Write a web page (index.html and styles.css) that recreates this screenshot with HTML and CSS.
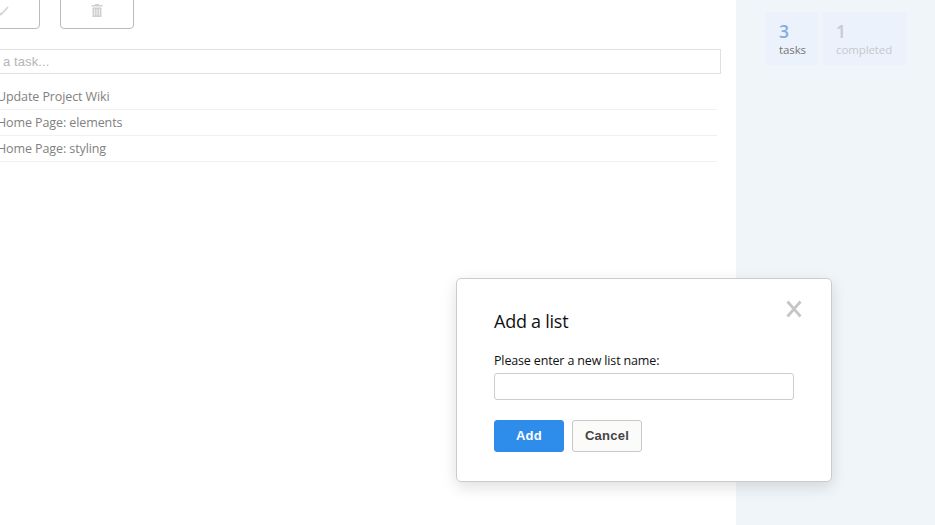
FILE: index.html
```html
<!DOCTYPE html>
<html lang="en">
<head>
<meta charset="utf-8">
<title>Tasks</title>
<link rel="stylesheet" href="styles.css">
</head>
<body>
<div class="app">
  <main class="main">
    <div class="toolbar">
      <button class="tool" aria-label="Complete"><svg width="12" height="12" viewBox="0 0 12 12"><path d="M1 6.5 4 9.5 11 2" fill="none" stroke="#d2d2d4" stroke-width="1.6"/></svg></button>
      <button class="tool" aria-label="Delete"><svg width="12" height="14" viewBox="0 0 12 14"><path d="M4 0h4v1h3.5v1.5H.5V1H4zM1.5 3.5h9V13h-9z" fill="#d0d0d4"/><path d="M3.5 5v6.5M6 5v6.5M8.5 5v6.5" stroke="#f4f4f6" stroke-width=".9"/></svg></button>
    </div>
    <input class="new-task" placeholder="a task..." aria-label="New task">
    <ul class="tasks">
      <li>Update Project Wiki</li>
      <li>Home Page: elements</li>
      <li>Home Page: styling</li>
    </ul>
  </main>
  <aside class="side">
    <div class="stat open"><strong>3</strong><span>tasks</span></div>
    <div class="stat done"><strong>1</strong><span>completed</span></div>
  </aside>
</div>
<section class="dialog" role="dialog">
  <button class="close" aria-label="Close"><svg width="16" height="18" viewBox="0 0 16 18"><path d="M1.5 1.5 14.5 16.5M14.5 1.5 1.5 16.5" stroke="#c5c6c8" stroke-width="2.7"/></svg></button>
  <h2>Add a list</h2>
  <label for="name">Please enter a new list name:</label>
  <input id="name" class="name">
  <div class="actions"><button class="btn primary">Add</button><button class="btn">Cancel</button></div>
</section>
</body>
</html>
```
FILE: styles.css
```css
* { box-sizing: border-box; }
body { margin: 0; overflow: hidden; background: #fff; font-family: "Open Sans", "Noto Sans", sans-serif; }
button, input { margin: 0; font-family: "Liberation Sans", Arial, sans-serif; }
.app { display: flex; height: 525px; }
.main { width: 736px; overflow: hidden; }
.toolbar { display: flex; gap: 20px; height: 29px; margin-left: -34px; align-items: flex-end; }
.tool { width: 74px; height: 40px; flex: none; display: flex; align-items: center; justify-content: center; padding: 0; border: 1px solid #bbb; border-radius: 4px; background: #fff; }
.tool svg { display: block; margin-top: 3px; }
.new-task { display: block; width: 731px; height: 25px; margin: 20px 0 0 -10px; padding: 0 12px; border: 1px solid #e0e0e0; font-size: 13px; letter-spacing: .1px; outline: 0; }
.new-task::placeholder { color: #b5b5b5; opacity: 1; }
.tasks { list-style: none; margin: 10px 0 0 -3px; padding: 0; width: 720px; }
.tasks li { height: 26px; border-bottom: 1px solid #f0f0f0; line-height: 25px; font-size: 12.5px; letter-spacing: -.1px; color: #818181; white-space: nowrap; }
.side { flex: 1; display: flex; align-items: flex-start; gap: 5px; padding: 12px 0 0 30px; background: #f0f5fa; }
.stat { height: 53px; padding: 9px 13px 0; background: #ebf2fb; white-space: nowrap; }
.stat strong { display: block; height: 21px; line-height: 21px; font-size: 17.5px; font-weight: 600; }
.stat span { display: block; line-height: 16px; font-size: 11.5px; letter-spacing: -.1px; }
.open { width: 52px; color: #777; }
.open strong { color: #85ace2; }
.done { width: 83px; color: #c6c9ce; }
.dialog { position: absolute; left: 456px; top: 278px; width: 376px; height: 204px; padding: 29px 37px; border: 1px solid #ccc; border-radius: 5px; background: #fff; box-shadow: 0 5px 15px rgba(0,0,0,.13); }
.close { position: absolute; right: 29px; top: 21px; padding: 0; border: 0; background: none; }
.close svg { display: block; }
h2 { margin: 0; height: 27px; line-height: 26px; font-size: 18px; font-weight: 400; letter-spacing: -.25px; color: #111; }
label { display: block; margin-top: 16px; height: 20px; line-height: 20px; font-size: 12.5px; letter-spacing: -.15px; color: #111; white-space: nowrap; }
.name { display: block; width: 300px; height: 27px; margin-top: 2px; border: 1px solid #ccc; border-radius: 3px; }
.actions { display: flex; gap: 8px; margin-top: 20px; }
.btn { width: 70px; height: 32px; padding: 0 0 2px; border: 1px solid #c8c8c8; border-radius: 3px; background: #fbfbfa; color: #444; font-size: 13px; font-weight: 700; letter-spacing: .25px; }
.primary { border-color: #2e8dea; background: #2e8dea; color: #fff; }
```
